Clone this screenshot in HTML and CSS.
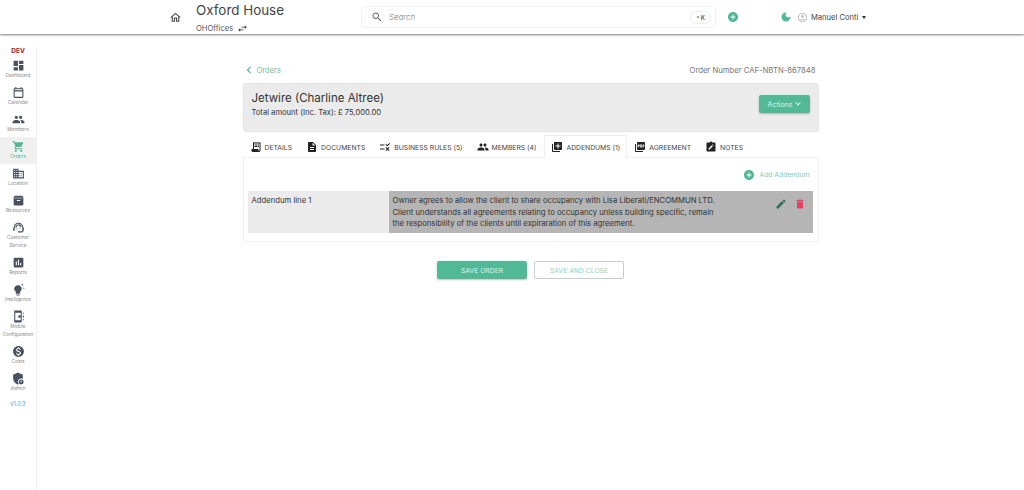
FILE: index.html
```html
<!DOCTYPE html>
<html lang="en">
<head>
<meta charset="utf-8">
<title>Order</title>
<link rel="stylesheet" href="styles.css">
</head>
<body>
<svg class="defs" width="0" height="0" aria-hidden="true">
<symbol id="i-home" viewBox="0 0 24 24"><path d="M12 5.69l5 4.5V18h-2v-6H9v6H7v-7.81l5-4.5M12 3L2 12h3v8h6v-6h2v6h6v-8h3L12 3z"/></symbol>
<symbol id="i-swap" viewBox="0 0 24 24"><path d="M6.99 11L3 15l3.99 4v-3H14v-2H6.99v-3zM21 9l-3.99-4v3H10v2h7.01v3L21 9z"/></symbol>
<symbol id="i-search" viewBox="0 0 24 24"><path d="M15.5 14h-.79l-.28-.27C15.41 12.59 16 11.11 16 9.5 16 5.91 13.09 3 9.5 3S3 5.91 3 9.5 5.91 16 9.5 16c1.61 0 3.09-.59 4.23-1.57l.27.28v.79l5 4.99L20.49 19l-4.99-5zm-6 0C7.01 14 5 11.99 5 9.5S7.01 5 9.5 5 14 7.01 14 9.5 11.99 14 9.5 14z"/></symbol>
<symbol id="i-add" viewBox="0 0 24 24"><path d="M12 2C6.48 2 2 6.48 2 12s4.48 10 10 10 10-4.48 10-10S17.52 2 12 2zm5 11h-4v4h-2v-4H7v-2h4V7h2v4h4v2z"/></symbol>
<symbol id="i-moon" viewBox="0 0 24 24"><path d="M12 3c-4.97 0-9 4.03-9 9s4.03 9 9 9 9-4.03 9-9c0-.46-.04-.92-.1-1.36-.98 1.37-2.58 2.26-4.4 2.26-2.98 0-5.4-2.42-5.4-5.4 0-1.81.89-3.42 2.26-4.4-.44-.06-.9-.1-1.36-.1z"/></symbol>
<symbol id="i-account" viewBox="0 0 24 24"><path d="M12 2C6.48 2 2 6.48 2 12s4.48 10 10 10 10-4.48 10-10S17.52 2 12 2zM7.35 18.5C8.66 17.56 10.26 17 12 17s3.34.56 4.65 1.5c-1.31.94-2.91 1.5-4.65 1.5s-3.34-.56-4.65-1.5zm10.79-1.38C16.45 15.8 14.32 15 12 15s-4.45.8-6.14 2.12C4.7 15.73 4 13.95 4 12c0-4.42 3.58-8 8-8s8 3.58 8 8c0 1.95-.7 3.73-1.86 5.12z"/><circle cx="12" cy="9.5" r="3.2"/></symbol>
<symbol id="i-dashboard" viewBox="0 0 24 24"><path d="M3 13h8V3H3v10zm0 8h8v-6H3v6zm10 0h8V11h-8v10zm0-18v6h8V3h-8z"/></symbol>
<symbol id="i-calendar" viewBox="0 0 24 24"><path d="M19 4h-1V2h-2v2H8V2H6v2H5c-1.11 0-2 .9-2 2v14c0 1.1.89 2 2 2h14c1.1 0 2-.9 2-2V6c0-1.1-.9-2-2-2zm0 16H5V10h14v10zm0-12H5V6h14v2z"/></symbol>
<symbol id="i-people" viewBox="0 0 24 24"><path d="M16 11c1.66 0 2.99-1.34 2.99-3S17.66 5 16 5c-1.66 0-3 1.34-3 3s1.34 3 3 3zm-8 0c1.66 0 2.99-1.34 2.99-3S9.66 5 8 5C6.34 5 5 6.34 5 8s1.34 3 3 3zm0 2c-2.33 0-7 1.17-7 3.5V19h14v-2.5c0-2.33-4.67-3.5-7-3.5zm8 0c-.29 0-.62.02-.97.05 1.16.84 1.97 1.97 1.97 3.45V19h6v-2.5c0-2.33-4.67-3.5-7-3.5z"/></symbol>
<symbol id="i-cart" viewBox="0 0 24 24"><path d="M7 18c-1.1 0-1.99.9-1.99 2S5.9 22 7 22s2-.9 2-2-.9-2-2-2zM1 2v2h2l3.6 7.59-1.35 2.45c-.16.28-.25.61-.25.96 0 1.1.9 2 2 2h12v-2H7.42c-.14 0-.25-.11-.25-.25l.03-.12.9-1.63h7.45c.75 0 1.41-.41 1.75-1.03l3.58-6.49c.08-.14.12-.31.12-.48 0-.55-.45-1-1-1H5.21l-.94-2H1zm16 16c-1.1 0-1.99.9-1.99 2s.89 2 1.99 2 2-.9 2-2-.9-2-2-2z"/></symbol>
<symbol id="i-location" viewBox="0 0 24 24"><path d="M12 7V3H2v18h20V7H12zM6 19H4v-2h2v2zm0-4H4v-2h2v2zm0-4H4V9h2v2zm0-4H4V5h2v2zm4 12H8v-2h2v2zm0-4H8v-2h2v2zm0-4H8V9h2v2zm0-4H8V5h2v2zm10 12h-8v-2h2v-2h-2v-2h2v-2h-2V9h8v10zm-2-8h-2v2h2v-2zm0 4h-2v2h2v-2z"/></symbol>
<symbol id="i-archive" viewBox="0 0 24 24"><path fill-rule="evenodd" d="M5 3h14l2 3v13c0 1.1-.9 2-2 2H5c-1.1 0-2-.9-2-2V6l2-3zm-.5 4h15v1h-15V7zM9 11v2h6v-2H9z"/></symbol>
<symbol id="i-agent" viewBox="0 0 24 24"><path d="M21 12.22C21 6.73 16.74 3 12 3c-4.69 0-9 3.65-9 9.28-.6.34-1 .98-1 1.72v2c0 1.1.9 2 2 2h1v-6.1c0-3.87 3.13-7 7-7s7 3.13 7 7V19h-8v2h8c1.1 0 2-.9 2-2v-1.22c.59-.31 1-.92 1-1.64v-2.3c0-.7-.41-1.31-1-1.62z"/><circle cx="9" cy="13" r="1"/><circle cx="15" cy="13" r="1"/><path d="M18 11.03C17.52 8.18 15.04 6 12.05 6c-3.03 0-6.29 2.51-6.03 6.45 2.47-1.01 4.33-3.21 4.86-5.89 1.31 2.63 4 4.44 7.12 4.47z"/></symbol>
<symbol id="i-reports" viewBox="0 0 24 24"><path d="M19 3H5c-1.1 0-2 .9-2 2v14c0 1.1.9 2 2 2h14c1.1 0 2-.9 2-2V5c0-1.1-.9-2-2-2zM9 17H7v-7h2v7zm4 0h-2V7h2v10zm4 0h-2v-4h2v4z"/></symbol>
<symbol id="i-bulb" viewBox="0 0 24 24"><path d="M8 22c0 .55.45 1 1 1h4c.55 0 1-.45 1-1v-1H8v1zm3-18C7.14 4 4 6.9 4 10.5c0 2.2 1.19 4.1 3 5.3V19c0 .55.45 1 1 1h6c.55 0 1-.45 1-1v-3.2c1.81-1.2 3-3.1 3-5.3C18 6.9 14.86 4 11 4z"/><path d="M19 1l.7 1.8 1.8.7-1.8.7-.7 1.8-.7-1.8-1.8-.7 1.8-.7zM22 8l.5 1 1 .5-1 .5-.5 1-.5-1-1-.5 1-.5z"/></symbol>
<symbol id="i-mobile" viewBox="0 0 24 24"><path fill-rule="evenodd" d="M6 1h10c1.1 0 2 .9 2 2v18c0 1.1-.9 2-2 2H6c-1.1 0-2-.9-2-2V3c0-1.1.9-2 2-2zm0 4v14h10V5H6z"/><circle cx="14" cy="12" r="2.5"/><path d="M20 5h2v2h-2zM20 10h2v4h-2zM20 17h2v2h-2z"/></symbol>
<symbol id="i-costs" viewBox="0 0 24 24"><path d="M12 2C6.48 2 2 6.48 2 12s4.48 10 10 10 10-4.48 10-10S17.52 2 12 2zm1.41 16.09V20h-2.67v-1.93c-1.71-.36-3.16-1.46-3.27-3.4h1.96c.1 1.05.82 1.87 2.65 1.87 1.96 0 2.4-.98 2.4-1.59 0-.83-.44-1.61-2.67-2.14-2.48-.6-4.18-1.62-4.18-3.67 0-1.72 1.39-2.84 3.11-3.21V4h2.67v1.95c1.86.45 2.79 1.86 2.85 3.39H14.3c-.05-1.11-.64-1.87-2.22-1.87-1.5 0-2.4.68-2.4 1.64 0 .84.65 1.39 2.67 1.91s4.18 1.39 4.18 3.91c-.01 1.83-1.38 2.83-3.12 3.16z"/></symbol>
<symbol id="i-admin" viewBox="0 0 24 24"><path d="M11 1L2 5v6c0 5.55 3.84 10.74 9 12 .7-.17 1.4-.42 2-.75-1.2-1.1-2-2.7-2-4.25 0-3.3 2.7-6 6-6 1.1 0 2.1.3 3 .8V5l-9-4z"/><path fill-rule="evenodd" d="M17 14a4.5 4.5 0 1 0 0 9 4.5 4.5 0 0 0 0-9zm0 2a1.4 1.4 0 1 1 0 2.8 1.4 1.4 0 0 1 0-2.8z"/></symbol>
<symbol id="i-left" viewBox="0 0 24 24"><path d="M15.41 7.41L14 6l-6 6 6 6 1.41-1.41L10.83 12z"/></symbol>
<symbol id="i-receipt" viewBox="0 0 24 24"><path d="M19.5 3.5L18 2l-1.5 1.5L15 2l-1.5 1.5L12 2l-1.5 1.5L9 2 7.5 3.5 6 2v14H3v3c0 1.66 1.34 3 3 3h12c1.66 0 3-1.34 3-3V2l-1.5 1.5zM19 19c0 .55-.45 1-1 1s-1-.45-1-1v-3H8V5h11v14z"/><path d="M9 7h6v2H9zM16 7h2v2h-2zM9 10h6v2H9zM16 10h2v2h-2z"/></symbol>
<symbol id="i-doc" viewBox="0 0 24 24"><path d="M14 2H6c-1.1 0-1.99.9-1.99 2L4 20c0 1.1.89 2 1.99 2H18c1.1 0 2-.9 2-2V8l-6-6zm2 16H8v-2h8v2zm0-4H8v-2h8v2zm-3-5V3.5L18.5 9H13z"/></symbol>
<symbol id="i-rule" viewBox="0 0 24 24"><path d="M16.54 11L13 7.46l1.41-1.41 2.12 2.12 4.24-4.24 1.41 1.41L16.54 11zM11 7H2v2h9V7zm10 6.41L19.59 12 17 14.59 14.41 12 13 13.41 15.59 16 13 18.59 14.41 20 17 17.41 19.59 20 21 18.59 18.41 16 21 13.41zM11 15H2v2h9v-2z"/></symbol>
<symbol id="i-library" viewBox="0 0 24 24"><path d="M4 6H2v14c0 1.1.9 2 2 2h14v-2H4V6zm16-4H8c-1.1 0-2 .9-2 2v12c0 1.1.9 2 2 2h12c1.1 0 2-.9 2-2V4c0-1.1-.9-2-2-2zm-1 9h-4v4h-2v-4H9V9h4V5h2v4h4v2z"/></symbol>
<symbol id="i-pdf" viewBox="0 0 24 24"><path d="M20 2H8c-1.1 0-2 .9-2 2v12c0 1.1.9 2 2 2h12c1.1 0 2-.9 2-2V4c0-1.1-.9-2-2-2zm-8.5 7.5c0 .83-.67 1.5-1.5 1.5H9v2H7.5V7H10c.83 0 1.5.67 1.5 1.5v1zm5 2c0 .83-.67 1.5-1.5 1.5h-2.5V7H15c.83 0 1.5.67 1.5 1.5v3zm4-3H19v1h1.5V11H19v2h-1.5V7h3v1.5zM9 9.5h1v-1H9v1zM4 6H2v14c0 1.1.9 2 2 2h14v-2H4V6zm10 5.5h1v-3h-1v3z"/></symbol>
<symbol id="i-notes" viewBox="0 0 24 24"><path fill-rule="evenodd" d="M19 3h-4.18C14.4 1.84 13.3 1 12 1s-2.4.84-2.82 2H5c-1.1 0-2 .9-2 2v14c0 1.1.9 2 2 2h14c1.1 0 2-.9 2-2V5c0-1.1-.9-2-2-2zM7 17v-2.2l6.5-6.5 2.2 2.2L9.2 17H7zm9.5-7.3l-2.2-2.2 1-1 2.2 2.2-1 1z"/></symbol>
<symbol id="i-edit" viewBox="0 0 24 24"><path d="M3 17.25V21h3.75L17.81 9.94l-3.75-3.75L3 17.25zM20.71 7.04c.39-.39.39-1.02 0-1.41l-2.34-2.34c-.39-.39-1.02-.39-1.41 0l-1.83 1.83 3.75 3.75 1.83-1.83z"/></symbol>
<symbol id="i-delete" viewBox="0 0 24 24"><path d="M6 19c0 1.1.9 2 2 2h8c1.1 0 2-.9 2-2V7H6v12zM19 4h-3.5l-1-1h-5l-1 1H5v2h14V4z"/></symbol>
</svg>

<header class="topbar">
  <svg class="ic ic-home"><use href="#i-home"/></svg>
  <div class="brand">
    <div class="brand-title">Oxford House</div>
    <div class="brand-sub">OHOffices <svg class="ic ic-swap"><use href="#i-swap"/></svg></div>
  </div>
  <div class="search">
    <svg class="ic ic-search"><use href="#i-search"/></svg>
    <span class="search-text">Search</span>
    <span class="kbd">^ K</span>
  </div>
  <svg class="ic ic-quick"><use href="#i-add"/></svg>
  <svg class="ic ic-moon"><use href="#i-moon"/></svg>
  <svg class="ic ic-account"><use href="#i-account"/></svg>
  <span class="user">Manuel Conti</span>
  <span class="caret"></span>
</header>

<div class="shell">
  <nav class="sidebar">
    <div class="env">DEV</div>
    <a class="nav-item"><svg class="ic"><use href="#i-dashboard"/></svg><span>Dashboard</span></a>
    <a class="nav-item"><svg class="ic"><use href="#i-calendar"/></svg><span>Calendar</span></a>
    <a class="nav-item"><svg class="ic"><use href="#i-people"/></svg><span>Members</span></a>
    <a class="nav-item is-active"><svg class="ic"><use href="#i-cart"/></svg><span>Orders</span></a>
    <a class="nav-item"><svg class="ic"><use href="#i-location"/></svg><span>Location</span></a>
    <a class="nav-item"><svg class="ic"><use href="#i-archive"/></svg><span>Resources</span></a>
    <a class="nav-item nav-tall"><svg class="ic"><use href="#i-agent"/></svg><span>Customer<br>Service</span></a>
    <a class="nav-item"><svg class="ic"><use href="#i-reports"/></svg><span>Reports</span></a>
    <a class="nav-item"><svg class="ic"><use href="#i-bulb"/></svg><span>Intelligence</span></a>
    <a class="nav-item nav-tall"><svg class="ic"><use href="#i-mobile"/></svg><span>Mobile<br>Configuration</span></a>
    <a class="nav-item"><svg class="ic"><use href="#i-costs"/></svg><span>Costs</span></a>
    <a class="nav-item"><svg class="ic"><use href="#i-admin"/></svg><span>Admin</span></a>
    <div class="version">v1.0.3</div>
  </nav>

  <main class="main">
    <div class="content">
      <div class="crumbs">
        <a class="back"><svg class="ic ic-back"><use href="#i-left"/></svg>Orders</a>
        <span class="order-no">Order Number CAF-NBTN-867848</span>
      </div>
      <section class="summary">
        <div>
          <h1 class="summary-title">Jetwire (Charline Altree)</h1>
          <p class="summary-amount">Total amount (Inc. Tax): £ 75,000.00</p>
        </div>
        <button class="btn-actions">Actions <span class="chev"></span></button>
      </section>
      <div class="tabs">
        <a class="tab"><svg class="ic"><use href="#i-receipt"/></svg>DETAILS</a>
        <a class="tab"><svg class="ic"><use href="#i-doc"/></svg>DOCUMENTS</a>
        <a class="tab"><svg class="ic"><use href="#i-rule"/></svg>BUSINESS RULES (5)</a>
        <a class="tab"><svg class="ic"><use href="#i-people"/></svg>MEMBERS (4)</a>
        <a class="tab is-active"><svg class="ic"><use href="#i-library"/></svg>ADDENDUMS (1)</a>
        <a class="tab"><svg class="ic"><use href="#i-pdf"/></svg>AGREEMENT</a>
        <a class="tab"><svg class="ic"><use href="#i-notes"/></svg>NOTES</a>
      </div>
      <section class="panel">
        <div class="panel-head">
          <a class="add-link"><svg class="ic ic-addlink"><use href="#i-add"/></svg>Add Addendum</a>
        </div>
        <div class="row">
          <div class="row-label">Addendum line 1</div>
          <div class="row-body">
            <p class="row-text">Owner agrees to allow the client to share occupancy with Lisa Liberati/ENCOMMUN LTD.<br>Client understands all agreements relating to occupancy unless building specific, remain<br>the responsibility of the clients until expiraration of this agreement.</p>
            <svg class="ic ic-edit"><use href="#i-edit"/></svg>
            <svg class="ic ic-delete"><use href="#i-delete"/></svg>
          </div>
        </div>
      </section>
      <div class="footer-actions">
        <button class="btn btn-primary">SAVE ORDER</button>
        <button class="btn btn-outline">SAVE AND CLOSE</button>
      </div>
    </div>
  </main>
</div>
</body>
</html>
```
FILE: styles.css
```css
* { box-sizing: border-box; }
html, body { margin: 0; height: 490px; overflow: hidden; }
body { font-family: Inter, "Liberation Sans", sans-serif; color: #333; background: #fff; }
.defs { position: absolute; }
.ic { display: block; width: 12px; height: 12px; fill: currentColor; flex: none; }

.topbar { display: flex; align-items: center; height: 34px; padding-left: 169px; background: #fff; box-shadow: 0 1px 2px rgba(0,0,0,.5); position: relative; }
.ic-home { width: 13px; height: 13px; color: #444; }
.brand { margin-left: 14px; width: 165px; }
.brand-title { font-size: 13.4px; line-height: 20px; color: #444; }
.brand-sub { display: flex; align-items: center; gap: 4px; font-size: 7.6px; line-height: 10px; color: #555; margin-top: 3px; }
.ic-swap { width: 11px; height: 11px; color: #333; }
.search { display: flex; align-items: center; width: 355px; height: 22px; border: 1px solid #f2f2f2; border-radius: 4px; padding: 0 4px 0 9px; }
.ic-search { width: 12px; height: 12px; color: #666; }
.search-text { margin-left: 6px; font-size: 7.8px; font-style: italic; color: #999; flex: 1; }
.kbd { font-size: 6px; font-weight: 600; color: #555; border: 1px solid #eee; border-radius: 6px; padding: 2px 5px; line-height: 7px; }
.ic-quick { color: #4fb792; margin-left: 11px; }
.ic-moon { color: #4fb792; margin-left: 41px; }
.ic-account { width: 11px; height: 11px; color: #bbb; margin-left: 5px; }
.user { font-size: 7.6px; color: #444; margin-left: 3px; }
.caret { width: 0; height: 0; border: 2.5px solid transparent; border-top: 3px solid #333; border-bottom: 0; margin-left: 4px; }

.shell { display: flex; height: 456px; }
.sidebar { width: 37px; margin-top: 12px; border-right: 1px solid #f0f0f0; display: flex; flex-direction: column; flex: none; }
.env { text-align: center; font-size: 6.5px; font-weight: 700; line-height: 9px; color: #a5182a; margin-top: 1px; }
.nav-item { display: flex; flex-direction: column; align-items: center; height: 27px; padding-top: 3px; color: #4a5160; font-size: 4.8px; line-height: 8px; text-align: center; }
.nav-item .ic { width: 13px; height: 13px; margin-bottom: -1px; }
.nav-item span { color: #8a8a8a; white-space: nowrap; }
.nav-tall { height: 35px; }
.nav-item.is-active { background: #f0f0f0; color: #4fb792; }
.nav-item.is-active span { color: #4fb792; }
.version { text-align: center; font-size: 5.5px; color: #4a9ad8; margin-top: 4px; line-height: 8px; }

.main { flex: 1; display: flex; justify-content: center; }
.content { width: 576px; padding-top: 29px; }
.crumbs { display: flex; justify-content: space-between; align-items: center; height: 14px; margin-bottom: 6px; }
.back { display: flex; align-items: center; font-size: 7.6px; color: #6cc3a6; }
.ic-back { width: 14px; height: 14px; color: #4fb792; margin-right: 1px; margin-left: -1px; }
.order-no { font-size: 7.7px; color: #777; margin-right: 3px; }

.summary { display: flex; justify-content: space-between; align-items: flex-start; height: 49px; background: #ebebeb; border: 1px solid #e3e3e3; border-radius: 3px; padding: 7px 8px 0; }
.summary-title { margin: 0; font-size: 11.5px; font-weight: 400; line-height: 15px; color: #333; }
.summary-amount { margin: 1px 0 0; font-size: 7.6px; line-height: 11px; color: #333; }
.btn-actions { display: flex; align-items: center; gap: 4px; height: 18px; width: 51px; justify-content: center; margin-top: 4px; padding: 0; border: 0; border-radius: 2px; background: #52b996; color: #dff3ec; font: 400 7px Inter, sans-serif; box-shadow: 0 1px 2px rgba(0,0,0,.25); }
.chev { width: 4px; height: 4px; border-right: 1px solid #dff3ec; border-bottom: 1px solid #dff3ec; transform: rotate(45deg) translate(-1px, -1px); }

.tabs { display: flex; height: 22px; margin-top: 3px; }
.tab { display: flex; align-items: center; gap: 3px; padding: 0 6px; font-size: 6.8px; color: #444; white-space: nowrap; height: 23px; border: 1px solid transparent; border-bottom: 0; }
.tab .ic { color: #222; }
.tab.is-active { background: #fff; border-color: #eee; position: relative; z-index: 1; margin-left: 1px; }

.panel { height: 85px; border: 1px solid #f1f1f1; padding: 0 5px 0 4px; }
.panel-head { display: flex; justify-content: flex-end; align-items: center; height: 33px; padding-right: 3px; }
.add-link { display: flex; align-items: center; gap: 4px; font-size: 6.8px; color: #7ccbb0; }
.ic-addlink { color: #4fb792; }
.row { display: flex; height: 42px; }
.row-label { width: 141px; background: #ebebeb; padding: 4px; font-size: 7.7px; line-height: 11.5px; color: #333; }
.row-body { flex: 1; display: flex; align-items: flex-start; background: #b5b5b5; padding: 4px 7px 0 4px; }
.row-text { margin: 0; flex: 1; font-size: 7.7px; line-height: 11.7px; color: #333; white-space: nowrap; }
.ic-edit { color: #2f6b57; margin-top: 3px; margin-right: 7px; }
.ic-delete { color: #e4405f; margin-top: 3px; }

.footer-actions { display: flex; justify-content: center; gap: 7px; margin-top: 19px; }
.btn { width: 90px; height: 18px; padding: 0; border-radius: 2px; font: 400 6.8px Inter, sans-serif; }
.btn-primary { background: #52b996; color: #dff3ec; border: 0; box-shadow: 0 1px 2px rgba(0,0,0,.25); }
.btn-outline { background: #fff; color: #8fd3bc; border: 1px solid #c4cfcb; }
```
